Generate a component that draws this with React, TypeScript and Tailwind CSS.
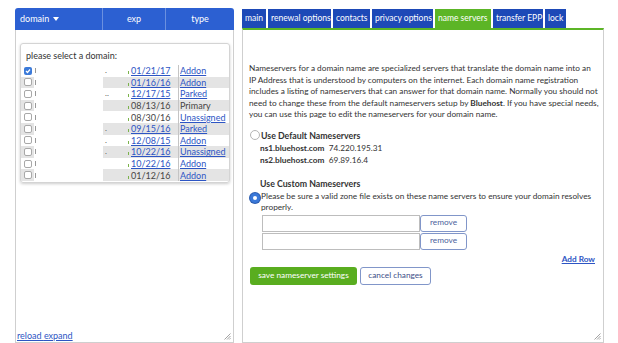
import React from "react";

const ROWS = [
  { exp: "01/21/17", expLink: true, type: "Addon", typeLink: true, checked: true, tail: "." },
  { exp: "01/16/16", expLink: true, type: "Addon", typeLink: true, tail: "" },
  { exp: "12/17/15", expLink: true, type: "Parked", typeLink: true, tail: ".." },
  { exp: "08/13/16", expLink: false, type: "Primary", typeLink: false, tail: "" },
  { exp: "08/30/16", expLink: false, type: "Unassigned", typeLink: true, tail: "" },
  { exp: "09/15/16", expLink: true, type: "Parked", typeLink: true, tail: "." },
  { exp: "12/08/15", expLink: true, type: "Addon", typeLink: true, tail: "." },
  { exp: "10/22/16", expLink: true, type: "Unassigned", typeLink: true, tail: "." },
  { exp: "10/22/16", expLink: true, type: "Addon", typeLink: true, tail: "" },
  { exp: "01/12/16", expLink: false, type: "Addon", typeLink: true, tail: "" },
];

const TABS = [
  { label: "main", w: "w-[24px]" },
  { label: "renewal options", w: "w-[63px]" },
  { label: "contacts", w: "w-[37px]" },
  { label: "privacy options", w: "w-[61px]" },
  { label: "name servers", w: "w-[56px]", active: true },
  { label: "transfer EPP", w: "w-[50px]" },
  { label: "lock", w: "w-[21px]" },
];

function ResizeGrip() {
  return (
    <svg className="absolute right-[2px] bottom-[2px]" width="7" height="7" viewBox="0 0 7 7">
      <path d="M6.5 0.5 L0.5 6.5 M6.5 3 L3 6.5 M6.5 5.2 L5.2 6.5" stroke="#8a8a8a" strokeWidth="0.8" />
    </svg>
  );
}

function DomainList() {
  return (
    <div className="flex h-[335px] w-[219px] flex-col">
      <div className="flex h-[22px] rounded-t-[3px] bg-[#2c60d2] text-[9px] text-white">
        <div className="flex w-[87px] items-center gap-[4px] pl-[5px]">
          domain
          <svg width="6" height="4" viewBox="0 0 6 4">
            <path d="M0 0 H6 L3 4 Z" fill="#ffffff" />
          </svg>
        </div>
        <div className="flex w-[63px] items-center justify-center border-l border-white/30">exp</div>
        <div className="flex flex-1 items-center justify-center border-l border-white/30">type</div>
      </div>
      <div className="relative flex flex-1 flex-col border-x border-b border-[#cfcfcf]">
        <div className="mt-[13px] ml-[4px] mr-[3px] rounded-[3px] border border-[#d4d4d4] pb-[1px] shadow-[0_1px_3px_rgba(0,0,0,0.2)]">
          <div className="px-[5px] pt-[6px] pb-[4px] text-[9px] leading-[11px] text-[#333]">please select a domain:</div>
          {ROWS.map((r, i) => {
            const stripe = i % 2 === 1 ? "bg-[#e4e4e4]" : "bg-white";
            return (
              <div key={i} className={`flex h-[11.6px] items-center text-[9px] leading-[11px] text-[#444] ${stripe}`}>
                <div className="flex w-[13px] items-center justify-center">
                  {r.checked ? (
                    <span className="flex h-[8px] w-[8px] items-center justify-center rounded-[2px] bg-[#3b7ad9]">
                      <svg width="6" height="6" viewBox="0 0 6 6">
                        <path d="M1 3 L2.5 4.5 L5 1.5" stroke="#fff" strokeWidth="1.2" fill="none" />
                      </svg>
                    </span>
                  ) : (
                    <span className="h-[8px] w-[8px] rounded-[2px] border border-[#a8a8a8] bg-white" />
                  )}
                </div>
                <div className="flex h-full w-[69px] items-center bg-white pl-[1px] text-[#888]">
                  <span className="h-[5px] w-[1px] bg-[#999]" />
                </div>
                <div className="w-[25px] pl-[2px] text-[8px] text-[#555]">{r.tail}</div>
                <div className="flex w-[50px] items-center">
                  <span className="mr-[2px] mt-[4px] h-[3px] w-[1px] bg-[#7bb34a]" />
                  {r.expLink ? <span className="text-[#2d55c4] underline">{r.exp}</span> : <span>{r.exp}</span>}
                </div>
                <div className="flex h-full flex-1 items-center border-l border-[#c4c4c4] pl-[1px]">
                  {r.typeLink ? <span className="text-[#2d55c4] underline">{r.type}</span> : <span>{r.type}</span>}
                </div>
              </div>
            );
          })}
        </div>
        <div className="mt-auto mb-[1px] ml-[1px] text-[9px] leading-[11px] text-[#2d55c4] underline">
          reload <span>expand</span>
        </div>
        <ResizeGrip />
      </div>
    </div>
  );
}

function Radio({ on }: { on?: boolean }) {
  return on ? (
    <span className="flex h-[10px] w-[10px] shrink-0 items-center justify-center rounded-full bg-[#3a78d8] shadow-[0_0_0_1px_#2a5cb0]">
      <span className="h-[4px] w-[4px] rounded-full bg-white" />
    </span>
  ) : (
    <span className="h-[10px] w-[10px] shrink-0 rounded-full border border-[#b5b5b5] bg-white" />
  );
}

function NameServers() {
  return (
    <div className="flex h-[334px] w-[362px] flex-col">
      <div className="flex h-[19px] gap-[2px]">
        {TABS.map((t) => (
          <div
            key={t.label}
            className={`flex items-center whitespace-nowrap pl-[3px] text-[8.5px] text-white ${t.w} ${t.active ? "bg-[#5cb526]" : "bg-[#1d49b7]"}`}
          >
            {t.label}
          </div>
        ))}
      </div>
      <div className="relative flex flex-1 flex-col border-x border-b border-t-2 border-x-[#cfcfcf] border-b-[#cfcfcf] border-t-[#5cb526] px-[6px] pt-[33px] text-[8.25px] leading-[11.5px] text-[#333]">
        <p className="whitespace-nowrap">
          Nameservers for a domain name are specialized servers that translate the domain name into an
          <br />
          IP Address that is understood by computers on the internet. Each domain name registration
          <br />
          includes a listing of nameservers that can answer for that domain name. Normally you should not
          <br />
          need to change these from the default nameservers setup by <b>Bluehost</b>. If you have special needs,
          <br />
          you can use this page to edit the nameservers for your domain name.
        </p>
        <div className="mt-[9px] flex items-center gap-[1px] pl-[1px]">
          <Radio />
          <b className="text-[8.75px]">Use Default Nameservers</b>
        </div>
        <div className="mt-[1px] pl-[11px] leading-[12px]">
          <div>
            <b>ns1.bluehost.com</b>&nbsp; 74.220.195.31
          </div>
          <div>
            <b>ns2.bluehost.com</b>&nbsp; 69.89.16.4
          </div>
        </div>
        <div className="mt-[12px] pl-[11px]">
          <b className="text-[8.75px]">Use Custom Nameservers</b>
        </div>
        <div className="flex gap-[1px] pl-[1px]">
          <span className="mt-[2px]">
            <Radio on />
          </span>
          <div className="whitespace-nowrap">
            Please be sure a valid zone file exists on these name servers to ensure your domain resolves
            <br />
            properly.
          </div>
        </div>
        <div className="mt-[1px] flex flex-col gap-[1px] pl-[13px]">
          {[0, 1].map((k) => (
            <div key={k} className="flex h-[17px]">
              <div className="w-[158px] border border-[#bdbdbd] bg-white" />
              <div className="flex w-[47px] items-center justify-center rounded-[3px] border border-[#8196c9] bg-white text-[#4b5f9c]">
                remove
              </div>
            </div>
          ))}
        </div>
        <div className="mt-[4px] flex justify-end pr-[2px]">
          <span className="font-bold text-[#2d55c4] underline">Add Row</span>
        </div>
        <div className="mt-[2px] flex gap-[3px] pl-[1px]">
          <div className="flex h-[18px] w-[107px] items-center justify-center rounded-[3px] bg-[#59ad1f] text-white">
            save nameserver settings
          </div>
          <div className="flex h-[18px] w-[71px] items-center justify-center rounded-[3px] border border-[#8196c9] bg-white text-[#3d4f88]">
            cancel changes
          </div>
        </div>
        <ResizeGrip />
      </div>
    </div>
  );
}

export default function App() {
  return (
    <div className="flex h-[343px] w-[618px] gap-[8px] bg-white pl-[15px] pt-[8px] font-['Lato','Open_Sans',sans-serif]">
      <DomainList />
      <div className="pt-[1px]">
        <NameServers />
      </div>
    </div>
  );
}
